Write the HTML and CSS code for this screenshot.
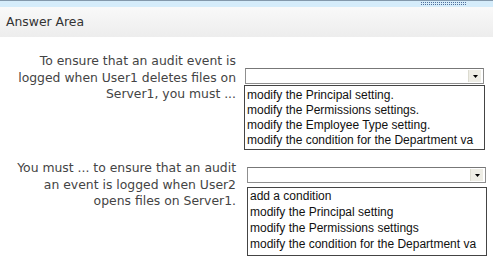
FILE: index.html
```html
<!DOCTYPE html>
<html lang="en">
<head>
    <meta charset="UTF-8">
    <meta name="viewport" content="width=device-width, initial-scale=1.0">
    <title>Answer Area</title>
    <link rel="stylesheet" href="styles.css">
</head>
<body>

<div class="topbar">
    <svg class="grip" width="46" height="4" viewBox="0 0 46 4">
        <defs>
            <pattern id="dots" width="2" height="2" patternUnits="userSpaceOnUse">
                <rect x="0" y="0" width="1" height="1" fill="#4f6f9c"/>
            </pattern>
        </defs>
        <rect width="46" height="4" fill="url(#dots)"/>
    </svg>
</div>

<div class="panel-head">Answer Area</div>

<div class="answers">
    <div class="item item-first">
        <div class="prompt">To ensure that an audit event is<br>logged when User1 deletes files on<br>Server1, you must ...</div>
        <div class="controls">
            <div class="combo">
                <span class="combo-btn">
                    <svg width="5" height="3" viewBox="0 0 5 3"><path d="M0 0h5L2.5 3z" fill="#000"/></svg>
                </span>
            </div>
            <ul class="choices">
                <li>modify the Principal setting.</li>
                <li>modify the Permissions settings.</li>
                <li>modify the Employee Type setting.</li>
                <li>modify the condition for the Department va</li>
            </ul>
        </div>
    </div>

    <div class="item item-second">
        <div class="prompt">You must ... to ensure that an audit<br>an event is logged when User2<br>opens files on Server1.</div>
        <div class="controls">
            <div class="combo">
                <span class="combo-btn">
                    <svg width="5" height="3" viewBox="0 0 5 3"><path d="M0 0h5L2.5 3z" fill="#000"/></svg>
                </span>
            </div>
            <ul class="choices">
                <li>add a condition</li>
                <li>modify the Principal setting</li>
                <li>modify the Permissions settings</li>
                <li>modify the condition for the Department va</li>
            </ul>
        </div>
    </div>
</div>

</body>
</html>
```

FILE: styles.css
```css
body {
    margin: 0;
    font-family: "DejaVu Sans", Verdana, sans-serif;
    color: #444;
    background: #fff;
}
.topbar {
    height: 6px;
    border-top: 1px solid #8398ab;
    background-color: #d5ecfa;
    display: flex;
    justify-content: flex-end;
    align-items: center;
    padding-right: 26px;
}
.grip {
    display: block;
}
.panel-head {
    height: 30px;
    line-height: 30px;
    padding-left: 6px;
    font-size: 12.4px;
    color: #333;
    background: linear-gradient(#f9f9f9, #ededed);
}
.answers {
    padding-top: 16px;
}
.item {
    display: grid;
    grid-template-columns: 244px 243px;
}
.item-second {
    margin-top: 10px;
}
.prompt {
    padding-right: 8px;
    text-align: right;
    white-space: nowrap;
    font-size: 12.4px;
    line-height: 16.5px;
}
.item-first .controls {
    padding-top: 15px;
}
.item-second .controls {
    padding-top: 7px;
    padding-left: 2px;
}
.combo {
    box-sizing: border-box;
    width: 239px;
    height: 16px;
    margin-left: 1px;
    border: 1px solid #8f8f8f;
    border-top-color: #777;
    background: #fff;
    display: flex;
    justify-content: flex-end;
    padding: 1px 2px 1px 0;
}
.combo-btn {
    width: 12px;
    background: #eeede5;
    border-left: 1px solid #dcdbd0;
    display: flex;
    align-items: center;
    justify-content: center;
}
.combo-btn svg {
    display: block;
    margin-top: 1px;
}
.choices {
    list-style: none;
    margin: 1px 0 0;
    padding: 2px 0 1px 2px;
    width: 241px;
    box-sizing: border-box;
    border: 1px solid #444;
    background: #fff;
    font-family: "Liberation Sans", Arial, sans-serif;
    font-size: 12px;
    line-height: 15px;
    color: #111;
}
.choices li {
    white-space: nowrap;
}
.item-second .choices {
    margin: 4px 0 0 1px;
    width: 240px;
    padding: 0 0 3px 2px;
    line-height: 16px;
}
```
